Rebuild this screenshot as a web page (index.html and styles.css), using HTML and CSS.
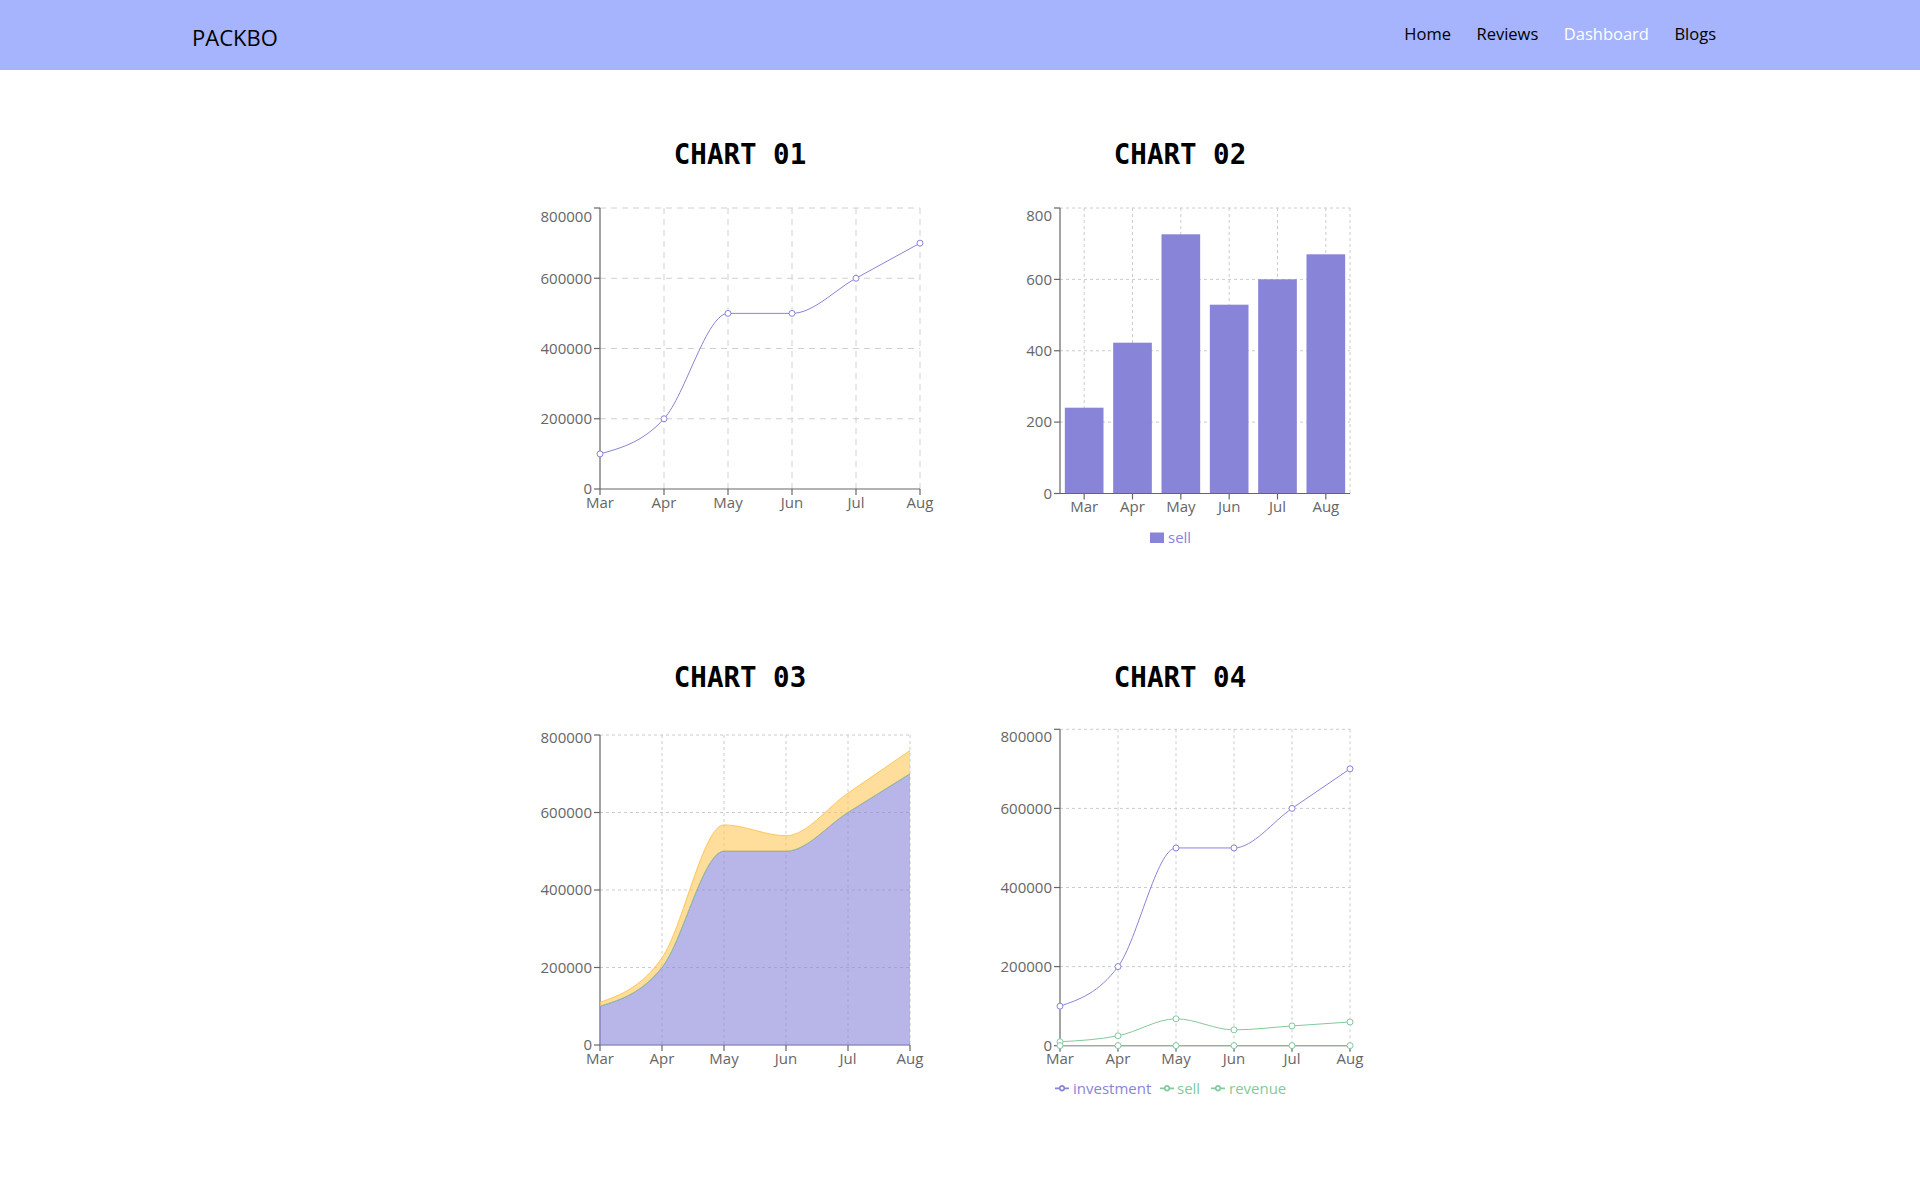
FILE: index.html
```html
<!DOCTYPE html>
<html lang="en">
<head>
<meta charset="utf-8">
<title>PACKBO Dashboard</title>
<link rel="stylesheet" href="styles.css">
</head>
<body>
<header class="navbar">
  <div class="brand">PACKBO</div>
  <nav>
    <ul class="nav-links">
      <li><a href="#">Home</a></li>
      <li><a href="#">Reviews</a></li>
      <li><a href="#" class="active">Dashboard</a></li>
      <li><a href="#">Blogs</a></li>
    </ul>
  </nav>
</header>

<main class="dashboard">
  <!-- CHART 01 -->
  <section class="chart-card">
    <h2 class="chart-title">CHART 01</h2>
    <svg class="chart" viewBox="0 0 440 471" width="440" height="471">
      <g class="grid grid-long">
        <line x1="80" y1="18" x2="400" y2="18"/>
        <line x1="80" y1="88.25" x2="400" y2="88.25"/>
        <line x1="80" y1="158.5" x2="400" y2="158.5"/>
        <line x1="80" y1="228.75" x2="400" y2="228.75"/>
        <line x1="144" y1="18" x2="144" y2="299"/>
        <line x1="208" y1="18" x2="208" y2="299"/>
        <line x1="272" y1="18" x2="272" y2="299"/>
        <line x1="336" y1="18" x2="336" y2="299"/>
        <line x1="400" y1="18" x2="400" y2="299"/>
      </g>
      <g class="axis">
        <line x1="80" y1="18" x2="80" y2="299"/>
        <line x1="80" y1="299" x2="400" y2="299"/>
        <line x1="74" y1="18" x2="80" y2="18"/>
        <line x1="74" y1="88.25" x2="80" y2="88.25"/>
        <line x1="74" y1="158.5" x2="80" y2="158.5"/>
        <line x1="74" y1="228.75" x2="80" y2="228.75"/>
        <line x1="74" y1="299" x2="80" y2="299"/>
        <line x1="80" y1="299" x2="80" y2="305"/>
        <line x1="144" y1="299" x2="144" y2="305"/>
        <line x1="208" y1="299" x2="208" y2="305"/>
        <line x1="272" y1="299" x2="272" y2="305"/>
        <line x1="336" y1="299" x2="336" y2="305"/>
        <line x1="400" y1="299" x2="400" y2="305"/>
      </g>
      <g class="tick tick-y">
        <text x="72" y="26.4" dy="0.355em">800000</text>
        <text x="72" y="88.25" dy="0.355em">600000</text>
        <text x="72" y="158.5" dy="0.355em">400000</text>
        <text x="72" y="228.75" dy="0.355em">200000</text>
        <text x="72" y="299" dy="0.355em">0</text>
      </g>
      <g class="tick tick-x">
        <text x="80" y="307" dy="0.71em">Mar</text>
        <text x="144" y="307" dy="0.71em">Apr</text>
        <text x="208" y="307" dy="0.71em">May</text>
        <text x="272" y="307" dy="0.71em">Jun</text>
        <text x="336" y="307" dy="0.71em">Jul</text>
        <text x="400" y="307" dy="0.71em">Aug</text>
      </g>
      <path class="line-purple" d="M80,263.88 C101.33,258.02 122.67,252.17 144,228.75 C165.33,205.33 186.67,123.38 208,123.38 C229.33,123.38 250.67,123.38 272,123.38 C293.33,123.38 314.67,99.96 336,88.25 C357.33,76.54 378.67,64.83 400,53.13"/>
      <g class="dots dots-purple">
        <circle cx="80" cy="263.88" r="3"/>
        <circle cx="144" cy="228.75" r="3"/>
        <circle cx="208" cy="123.38" r="3"/>
        <circle cx="272" cy="123.38" r="3"/>
        <circle cx="336" cy="88.25" r="3"/>
        <circle cx="400" cy="53.13" r="3"/>
      </g>
    </svg>
  </section>

  <!-- CHART 02 -->
  <section class="chart-card">
    <h2 class="chart-title">CHART 02</h2>
    <svg class="chart" viewBox="0 0 440 471" width="440" height="471">
      <g class="grid">
        <line x1="100" y1="18" x2="390" y2="18"/>
        <line x1="100" y1="89.4" x2="390" y2="89.4"/>
        <line x1="100" y1="160.75" x2="390" y2="160.75"/>
        <line x1="100" y1="232.1" x2="390" y2="232.1"/>
        <line x1="124.17" y1="18" x2="124.17" y2="303.5"/>
        <line x1="172.5" y1="18" x2="172.5" y2="303.5"/>
        <line x1="220.83" y1="18" x2="220.83" y2="303.5"/>
        <line x1="269.17" y1="18" x2="269.17" y2="303.5"/>
        <line x1="317.5" y1="18" x2="317.5" y2="303.5"/>
        <line x1="365.83" y1="18" x2="365.83" y2="303.5"/>
        <line x1="390" y1="18" x2="390" y2="303.5"/>
      </g>
      <g class="bars">
        <rect x="104.83" y="217.7" width="38.67" height="85.8"/>
        <rect x="153.17" y="152.7" width="38.67" height="150.8"/>
        <rect x="201.5" y="44.3" width="38.67" height="259.2"/>
        <rect x="249.83" y="114.7" width="38.67" height="188.8"/>
        <rect x="298.17" y="89.3" width="38.67" height="214.2"/>
        <rect x="346.5" y="64.3" width="38.67" height="239.2"/>
      </g>
      <g class="axis">
        <line x1="100" y1="18" x2="100" y2="303.5"/>
        <line x1="100" y1="303.5" x2="390" y2="303.5"/>
        <line x1="94" y1="18" x2="100" y2="18"/>
        <line x1="94" y1="89.4" x2="100" y2="89.4"/>
        <line x1="94" y1="160.75" x2="100" y2="160.75"/>
        <line x1="94" y1="232.1" x2="100" y2="232.1"/>
        <line x1="94" y1="303.5" x2="100" y2="303.5"/>
        <line x1="124.17" y1="303.5" x2="124.17" y2="309.5"/>
        <line x1="172.5" y1="303.5" x2="172.5" y2="309.5"/>
        <line x1="220.83" y1="303.5" x2="220.83" y2="309.5"/>
        <line x1="269.17" y1="303.5" x2="269.17" y2="309.5"/>
        <line x1="317.5" y1="303.5" x2="317.5" y2="309.5"/>
        <line x1="365.83" y1="303.5" x2="365.83" y2="309.5"/>
      </g>
      <g class="tick tick-y">
        <text x="92" y="25.5" dy="0.355em">800</text>
        <text x="92" y="89.4" dy="0.355em">600</text>
        <text x="92" y="160.75" dy="0.355em">400</text>
        <text x="92" y="232.1" dy="0.355em">200</text>
        <text x="92" y="303.5" dy="0.355em">0</text>
      </g>
      <g class="tick tick-x">
        <text x="124.17" y="311.5" dy="0.71em">Mar</text>
        <text x="172.5" y="311.5" dy="0.71em">Apr</text>
        <text x="220.83" y="311.5" dy="0.71em">May</text>
        <text x="269.17" y="311.5" dy="0.71em">Jun</text>
        <text x="317.5" y="311.5" dy="0.71em">Jul</text>
        <text x="365.83" y="311.5" dy="0.71em">Aug</text>
      </g>
      <g class="legend">
        <rect class="legend-bar" x="190" y="342.5" width="14" height="10.5"/>
        <text class="legend-text purple" x="208" y="347.7" dy="0.355em">sell</text>
      </g>
    </svg>
  </section>

  <!-- CHART 03 -->
  <section class="chart-card">
    <h2 class="chart-title">CHART 03</h2>
    <svg class="chart" viewBox="0 0 440 471" width="440" height="471">
      <g class="grid">
        <line x1="80" y1="22" x2="390" y2="22"/>
        <line x1="80" y1="99.5" x2="390" y2="99.5"/>
        <line x1="80" y1="177" x2="390" y2="177"/>
        <line x1="80" y1="254.5" x2="390" y2="254.5"/>
        <line x1="142" y1="22" x2="142" y2="332"/>
        <line x1="204" y1="22" x2="204" y2="332"/>
        <line x1="266" y1="22" x2="266" y2="332"/>
        <line x1="328" y1="22" x2="328" y2="332"/>
        <line x1="390" y1="22" x2="390" y2="332"/>
      </g>
      <g class="axis">
        <line x1="80" y1="22" x2="80" y2="332"/>
        <line x1="80" y1="332" x2="390" y2="332"/>
        <line x1="74" y1="22" x2="80" y2="22"/>
        <line x1="74" y1="99.5" x2="80" y2="99.5"/>
        <line x1="74" y1="177" x2="80" y2="177"/>
        <line x1="74" y1="254.5" x2="80" y2="254.5"/>
        <line x1="74" y1="332" x2="80" y2="332"/>
        <line x1="80" y1="332" x2="80" y2="338"/>
        <line x1="142" y1="332" x2="142" y2="338"/>
        <line x1="204" y1="332" x2="204" y2="338"/>
        <line x1="266" y1="332" x2="266" y2="338"/>
        <line x1="328" y1="332" x2="328" y2="338"/>
        <line x1="390" y1="332" x2="390" y2="338"/>
      </g>
      <g class="tick tick-y">
        <text x="72" y="24.7" dy="0.355em">800000</text>
        <text x="72" y="99.5" dy="0.355em">600000</text>
        <text x="72" y="177" dy="0.355em">400000</text>
        <text x="72" y="254.5" dy="0.355em">200000</text>
        <text x="72" y="332" dy="0.355em">0</text>
      </g>
      <g class="tick tick-x">
        <text x="80" y="340" dy="0.71em">Mar</text>
        <text x="142" y="340" dy="0.71em">Apr</text>
        <text x="204" y="340" dy="0.71em">May</text>
        <text x="266" y="340" dy="0.71em">Jun</text>
        <text x="328" y="340" dy="0.71em">Jul</text>
        <text x="390" y="340" dy="0.71em">Aug</text>
      </g>
      <path class="area-purple" d="M80,293.25 C100.67,286.79 121.33,280.33 142,254.5 C162.67,228.67 183.33,138.25 204,138.25 C224.67,138.25 245.33,138.25 266,138.25 C286.67,138.25 307.33,112.42 328,99.5 C348.67,86.58 369.33,73.67 390,60.75 L390,332 L80,332 Z"/>
      <path class="line-purple" d="M80,293.25 C100.67,286.79 121.33,280.33 142,254.5 C162.67,228.67 183.33,138.25 204,138.25 C224.67,138.25 245.33,138.25 266,138.25 C286.67,138.25 307.33,112.42 328,99.5 C348.67,86.58 369.33,73.67 390,60.75"/>
      <path class="line-green" d="M80,293.1 C100.67,286.64 121.33,280.18 142,254.35 C162.67,228.52 183.33,138.1 204,138.1 C224.67,138.1 245.33,138.1 266,138.1 C286.67,138.1 307.33,112.27 328,99.35 C348.67,86.43 369.33,73.52 390,60.6"/>
      <path class="area-yellow" d="M80,289.38 C100.67,281.89 121.33,274.39 142,244.81 C162.67,215.23 183.33,111.9 204,111.9 C224.67,111.9 245.33,122.75 266,122.75 C286.67,122.75 307.33,94.33 328,80.13 C348.67,65.92 369.33,51.71 390,37.5 L390,60.6 C369.33,73.52 348.67,86.43 328,99.35 C307.33,112.27 286.67,138.1 266,138.1 C245.33,138.1 224.67,138.1 204,138.1 C183.33,138.1 162.67,228.52 142,254.35 C121.33,280.18 100.67,286.64 80,293.1 Z"/>
      <path class="line-yellow" d="M80,289.38 C100.67,281.89 121.33,274.39 142,244.81 C162.67,215.23 183.33,111.9 204,111.9 C224.67,111.9 245.33,122.75 266,122.75 C286.67,122.75 307.33,94.33 328,80.13 C348.67,65.92 369.33,51.71 390,37.5"/>
    </svg>
  </section>

  <!-- CHART 04 -->
  <section class="chart-card">
    <h2 class="chart-title">CHART 04</h2>
    <svg class="chart" viewBox="0 0 440 471" width="440" height="471">
      <g class="grid">
        <line x1="100" y1="16.3" x2="390" y2="16.3"/>
        <line x1="100" y1="95.4" x2="390" y2="95.4"/>
        <line x1="100" y1="174.5" x2="390" y2="174.5"/>
        <line x1="100" y1="253.6" x2="390" y2="253.6"/>
        <line x1="158" y1="16.3" x2="158" y2="332.7"/>
        <line x1="216" y1="16.3" x2="216" y2="332.7"/>
        <line x1="274" y1="16.3" x2="274" y2="332.7"/>
        <line x1="332" y1="16.3" x2="332" y2="332.7"/>
        <line x1="390" y1="16.3" x2="390" y2="332.7"/>
      </g>
      <g class="axis">
        <line x1="100" y1="16.3" x2="100" y2="332.7"/>
        <line x1="100" y1="332.7" x2="390" y2="332.7"/>
        <line x1="94" y1="16.3" x2="100" y2="16.3"/>
        <line x1="94" y1="95.4" x2="100" y2="95.4"/>
        <line x1="94" y1="174.5" x2="100" y2="174.5"/>
        <line x1="94" y1="253.6" x2="100" y2="253.6"/>
        <line x1="94" y1="332.7" x2="100" y2="332.7"/>
        <line x1="100" y1="332.7" x2="100" y2="338.7"/>
        <line x1="158" y1="332.7" x2="158" y2="338.7"/>
        <line x1="216" y1="332.7" x2="216" y2="338.7"/>
        <line x1="274" y1="332.7" x2="274" y2="338.7"/>
        <line x1="332" y1="332.7" x2="332" y2="338.7"/>
        <line x1="390" y1="332.7" x2="390" y2="338.7"/>
      </g>
      <g class="tick tick-y">
        <text x="92" y="24" dy="0.355em">800000</text>
        <text x="92" y="95.4" dy="0.355em">600000</text>
        <text x="92" y="174.5" dy="0.355em">400000</text>
        <text x="92" y="253.6" dy="0.355em">200000</text>
        <text x="92" y="332.7" dy="0.355em">0</text>
      </g>
      <g class="tick tick-x">
        <text x="100" y="340.7" dy="0.71em">Mar</text>
        <text x="158" y="340.7" dy="0.71em">Apr</text>
        <text x="216" y="340.7" dy="0.71em">May</text>
        <text x="274" y="340.7" dy="0.71em">Jun</text>
        <text x="332" y="340.7" dy="0.71em">Jul</text>
        <text x="390" y="340.7" dy="0.71em">Aug</text>
      </g>
      <path class="line-purple" d="M100,293.15 C119.33,286.56 138.67,279.97 158,253.6 C177.33,228.24 196.67,134.95 216,134.95 C235.33,134.95 254.67,134.95 274,134.95 C293.33,134.95 312.67,108.59 332,95.4 C351.33,82.22 370.67,69.03 390,55.85"/>
      <path class="line-green" d="M100,328.75 C119.33,327.69 138.67,326.64 158,322.81 C177.33,318.99 196.67,305.81 216,305.81 C235.33,305.81 254.67,316.88 274,316.88 C293.33,316.88 312.67,314.24 332,312.93 C351.33,311.61 370.67,310.29 390,308.97"/>
      <path class="line-green" d="M100,332.6 L390,332.6"/>
      <g class="dots dots-purple">
        <circle cx="100" cy="293.15" r="3"/>
        <circle cx="158" cy="253.6" r="3"/>
        <circle cx="216" cy="134.95" r="3"/>
        <circle cx="274" cy="134.95" r="3"/>
        <circle cx="332" cy="95.4" r="3"/>
        <circle cx="390" cy="55.85" r="3"/>
      </g>
      <g class="dots dots-green">
        <circle cx="100" cy="328.75" r="3"/>
        <circle cx="158" cy="322.81" r="3"/>
        <circle cx="216" cy="305.81" r="3"/>
        <circle cx="274" cy="316.88" r="3"/>
        <circle cx="332" cy="312.93" r="3"/>
        <circle cx="390" cy="308.97" r="3"/>
        <circle cx="100" cy="332.6" r="3"/>
        <circle cx="158" cy="332.6" r="3"/>
        <circle cx="216" cy="332.6" r="3"/>
        <circle cx="274" cy="332.6" r="3"/>
        <circle cx="332" cy="332.6" r="3"/>
        <circle cx="390" cy="332.6" r="3"/>
      </g>
      <g class="legend">
        <path class="legend-icon icon-purple" transform="translate(95,368.3) scale(0.4375)" d="M0,16h10.67A5.33,5.33,0,1,1,21.33,16H32M21.33,16A5.33,5.33,0,1,1,10.67,16"/>
        <text class="legend-text purple" x="113" y="375.3" dy="0.355em">investment</text>
        <path class="legend-icon icon-green" transform="translate(200,368.3) scale(0.4375)" d="M0,16h10.67A5.33,5.33,0,1,1,21.33,16H32M21.33,16A5.33,5.33,0,1,1,10.67,16"/>
        <text class="legend-text green" x="217" y="375.3" dy="0.355em">sell</text>
        <path class="legend-icon icon-green" transform="translate(251,368.3) scale(0.4375)" d="M0,16h10.67A5.33,5.33,0,1,1,21.33,16H32M21.33,16A5.33,5.33,0,1,1,10.67,16"/>
        <text class="legend-text green" x="269" y="375.3" dy="0.355em">revenue</text>
      </g>
    </svg>
  </section>
</main>
</body>
</html>
```

FILE: styles.css
```css
* {
  box-sizing: border-box;
}

body {
  margin: 0;
  background: #ffffff;
  color: #000000;
  font-family: "Open Sans", "Noto Sans", sans-serif;
}

/* ---------- Navbar ---------- */
.navbar {
  height: 70px;
  background: #a5b4fc;
  display: flex;
  justify-content: space-between;
  align-items: flex-start;
  padding: 22px 204px 0 192px;
}

.brand {
  font-size: 22px;
  line-height: 30px;
  color: #000;
}

.nav-links {
  display: flex;
  gap: 25.5px;
  list-style: none;
  margin: 1px 0 0;
  padding: 0;
}

.nav-links a {
  font-size: 16.5px;
  line-height: 22px;
  color: #000;
  text-decoration: none;
}

.nav-links a.active {
  color: #ffffff;
}

/* ---------- Dashboard grid ---------- */
.dashboard {
  display: grid;
  grid-template-columns: 440px 440px;
  justify-content: center;
  padding-top: 68px;
}

.chart-card {
  display: flex;
  flex-direction: column;
  align-items: center;
}

.chart-title {
  margin: 0 0 20px;
  font-family: "DejaVu Sans Mono", "Liberation Mono", monospace;
  font-weight: 700;
  font-size: 27.5px;
  line-height: 32px;
  color: #000;
}

.chart {
  display: block;
  width: 440px;
  height: 471px;
  overflow: visible;
}

/* ---------- Chart parts ---------- */
.grid line {
  stroke: #cccccc;
  stroke-width: 1;
  stroke-dasharray: 3 3;
  fill: none;
}

.grid-long line {
  stroke: #d0d0d0;
  stroke-dasharray: 6 5;
}

.axis line {
  stroke: #666666;
  stroke-width: 1.2;
}

.tick text {
  font-family: "Open Sans", "Noto Sans", sans-serif;
  font-size: 15px;
  fill: #666666;
}

.tick-y text {
  text-anchor: end;
}

.tick-x text {
  text-anchor: middle;
}

.line-purple {
  fill: none;
  stroke: #8884d8;
  stroke-width: 1;
}

.line-green {
  fill: none;
  stroke: #82ca9d;
  stroke-width: 1;
}

.line-yellow {
  fill: none;
  stroke: #ffc658;
  stroke-width: 1;
}

.area-purple {
  fill: #8884d8;
  fill-opacity: 0.6;
  stroke: none;
}

.area-yellow {
  fill: #ffc658;
  fill-opacity: 0.6;
  stroke: none;
}

.bars rect {
  fill: #8884d8;
}

.dots circle {
  fill: #ffffff;
  stroke-width: 1;
}

.dots-purple circle {
  stroke: #8884d8;
}

.dots-green circle {
  stroke: #82ca9d;
}

.legend-bar {
  fill: #8884d8;
}

.legend-icon {
  fill: none;
  stroke-width: 4;
}

.icon-purple {
  stroke: #8884d8;
}

.icon-green {
  stroke: #82ca9d;
}

.legend-text {
  font-family: "Open Sans", "Noto Sans", sans-serif;
  font-size: 15px;
}

.legend-text.purple {
  fill: #8884d8;
}

.legend-text.green {
  fill: #82ca9d;
}
```
